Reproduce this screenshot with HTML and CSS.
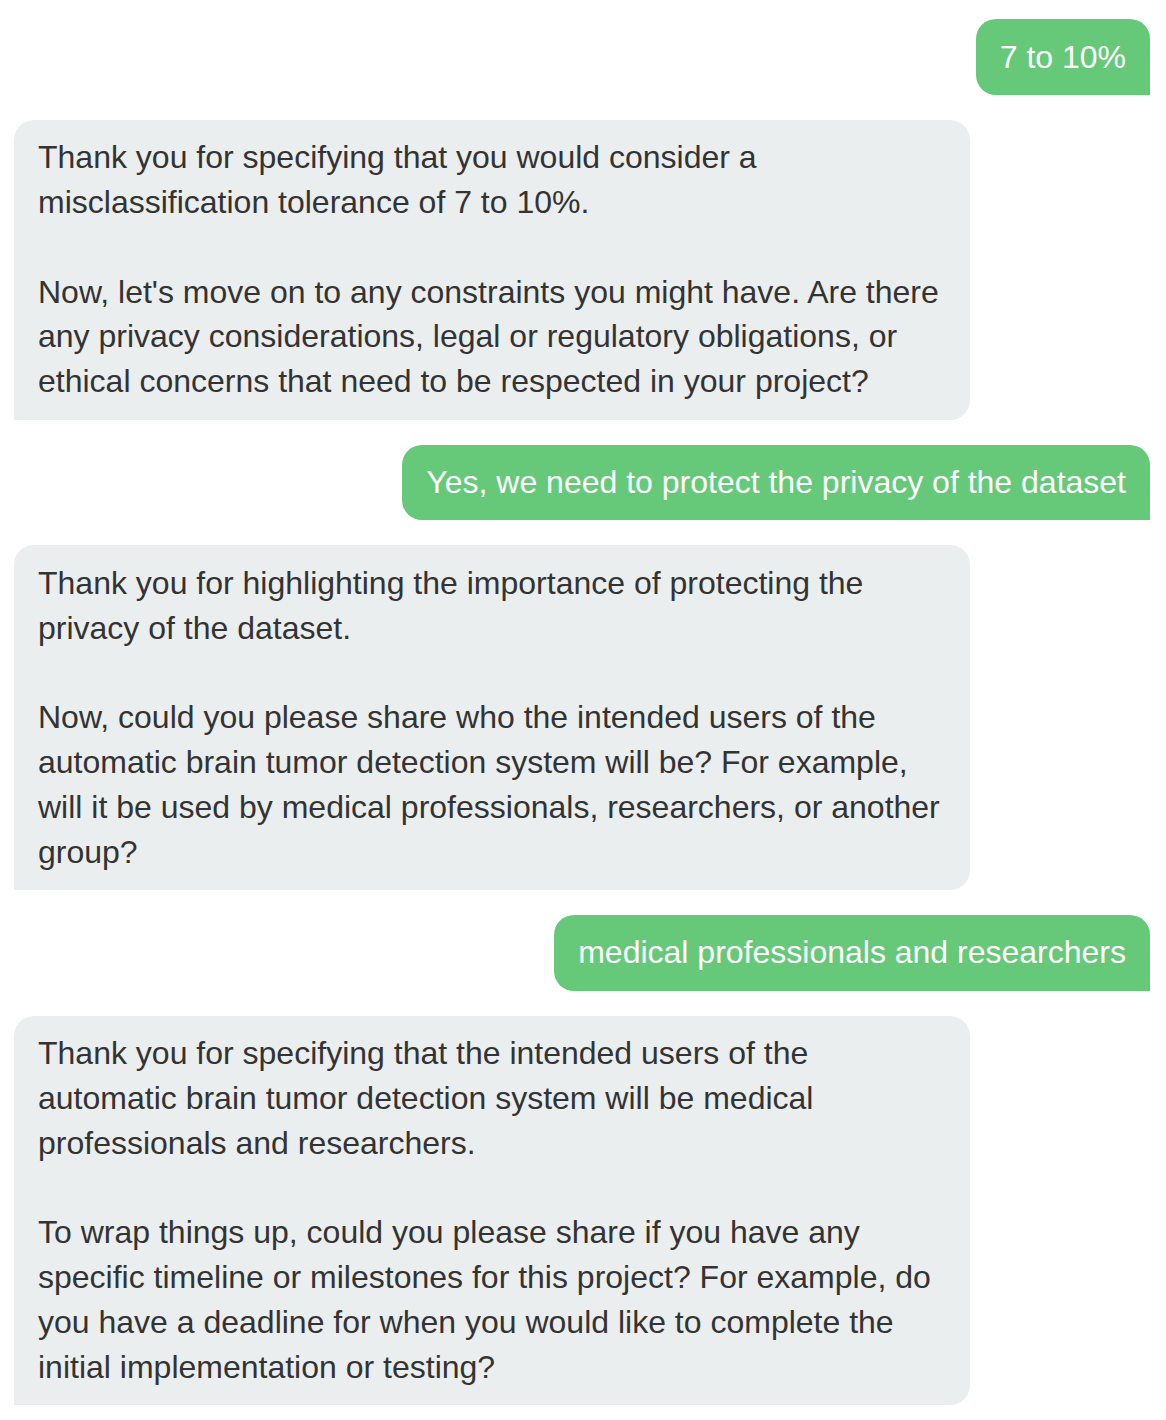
FILE: index.html
```html
<!DOCTYPE html>
<html lang="en">
<head>
<meta charset="utf-8">
<title>Chat</title>
<link rel="stylesheet" href="styles.css">
</head>
<body>
<div class="chat">
  <div class="msg user">7 to 10%</div>
  <div class="msg bot">
    <p>Thank you for specifying that you would consider a misclassification tolerance of 7 to 10%.</p>
    <p>Now, let's move on to any constraints you might have. Are there any privacy considerations, legal or regulatory obligations, or ethical concerns that need to be respected in your project?</p>
  </div>
  <div class="msg user">Yes, we need to protect the privacy of the dataset</div>
  <div class="msg bot">
    <p>Thank you for highlighting the importance of protecting the privacy of the dataset.</p>
    <p>Now, could you please share who the intended users of the automatic brain tumor detection system will be? For example, will it be used by medical professionals, researchers, or another group?</p>
  </div>
  <div class="msg user">medical professionals and researchers</div>
  <div class="msg bot">
    <p>Thank you for specifying that the intended users of the automatic brain tumor detection system will be medical professionals and researchers.</p>
    <p>To wrap things up, could you please share if you have any specific timeline or milestones for this project? For example, do you have a deadline for when you would like to complete the initial implementation or testing?</p>
  </div>
</div>
</body>
</html>
```
FILE: styles.css
```css
html, body {
  margin: 0;
  padding: 0;
  background: #ffffff;
}
body {
  font-family: "Liberation Sans", Arial, Helvetica, sans-serif;
  font-size: 32px;
  line-height: 1.4;
}
.chat {
  display: flex;
  flex-direction: column;
  gap: 25px;
  padding: 19px 16px 20px 14px;
}
.msg {
  box-sizing: border-box;
  max-width: 956px;
  padding: 15.5px 24px;
}
.msg p {
  margin: 0;
}
.msg p + p {
  margin-top: 44.8px;
}
.user {
  align-self: flex-end;
  background: #66c97a;
  color: #ffffff;
  border-radius: 20px 20px 0 20px;
}
.bot {
  align-self: flex-start;
  width: 956px;
  background: #ebeeef;
  color: #333333;
  border-radius: 20px 20px 20px 0;
}
```
